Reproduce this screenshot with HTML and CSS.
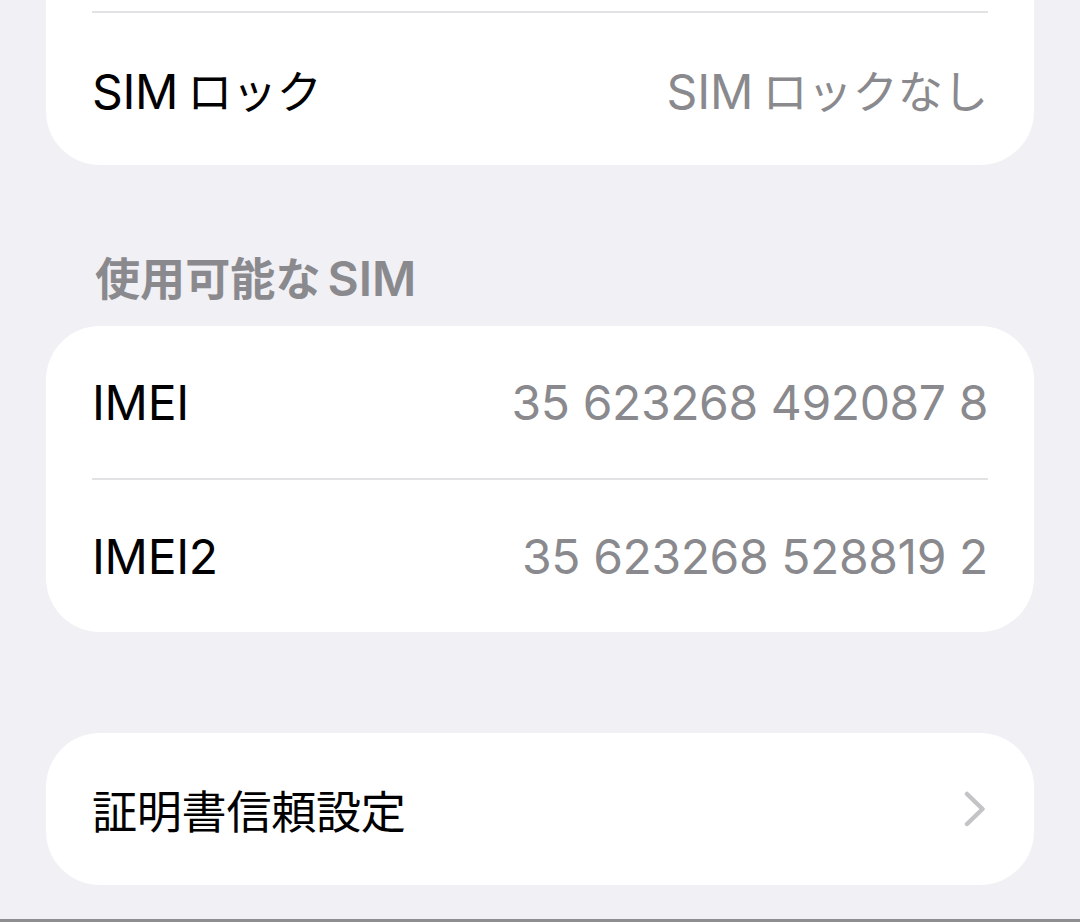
FILE: index.html
```html
<!DOCTYPE html>
<html lang="ja">
<head>
    <meta charset="UTF-8">
    <meta name="viewport" content="width=device-width, initial-scale=1.0">
    <title>情報</title>
    <link rel="stylesheet" href="styles.css">
</head>
<body>

<div class="screen">
    <!-- 上のグループ（上端は画面外） -->
    <section class="group group-cut">
        <div class="row-tail"></div>
        <div class="row">
            <span class="label">SIM<span class="ja after-latin">ロック</span></span>
            <span class="value">SIM<span class="ja after-latin">ロックなし</span></span>
        </div>
    </section>

    <h3 class="group-title"><span class="ja before-latin">使用可能な</span>SIM</h3>
    <section class="group">
        <div class="row">
            <span class="label">IMEI</span>
            <span class="value num">35 623268 492087 8</span>
        </div>
        <div class="row">
            <span class="label">IMEI2</span>
            <span class="value num">35 623268 528819 2</span>
        </div>
    </section>

    <section class="group group-spaced">
        <div class="row">
            <span class="label"><span class="ja">証明書信頼設定</span></span>
            <svg class="chevron" width="22" height="36" viewBox="0 0 22 36">
                <path d="M3 3 L18.5 18 L3 33" fill="none" stroke="#c4c4c7" stroke-width="4.5" stroke-linecap="round" stroke-linejoin="round"/>
            </svg>
        </div>
    </section>
</div>

<div class="bottom-edge"></div>

</body>
</html>
```

FILE: styles.css
```css
html, body {
    margin: 0;
    padding: 0;
    height: 922px;
    overflow: hidden;
}

body {
    background-color: #f0f0f5;
    font-family: Inter, "Noto Sans CJK JP", sans-serif;
    font-size: 48px;
    color: #000;
}

.screen {
    padding: 0 46px;
    height: 919px;
}

.group {
    background-color: #fff;
    border-radius: 54px;
}

.group-cut {
    border-top-left-radius: 0;
    border-top-right-radius: 0;
}

.group-spaced {
    margin-top: 101px;
}

.row-tail {
    height: 11px;
}

.row {
    margin: 0 46px;
    height: 152px;
    display: flex;
    align-items: center;
    justify-content: space-between;
}

.row-tail + .row,
.row + .row {
    border-top: 2px solid #e2e2e4;
}

.label {
    color: #000;
    letter-spacing: -0.3px;
}

.value {
    color: #8a8a8e;
}

.num {
    letter-spacing: -0.4px;
}

.ja {
    font-size: 0.94em;
}

/* 英字と和文の間の小さなアキ */
.after-latin {
    margin-left: 9px;
}

.before-latin {
    margin-right: 7px;
}

.group-title {
    margin: 85px 0 16px;
    padding-left: 49px;
    height: 60px;
    line-height: 58px;
    font-size: 48px;
    font-weight: 600;
    color: #8a8a8e;
}

.chevron {
    display: block;
    margin-right: 2px;
}

.bottom-edge {
    height: 3px;
    background-color: #8e8e91;
}
```
